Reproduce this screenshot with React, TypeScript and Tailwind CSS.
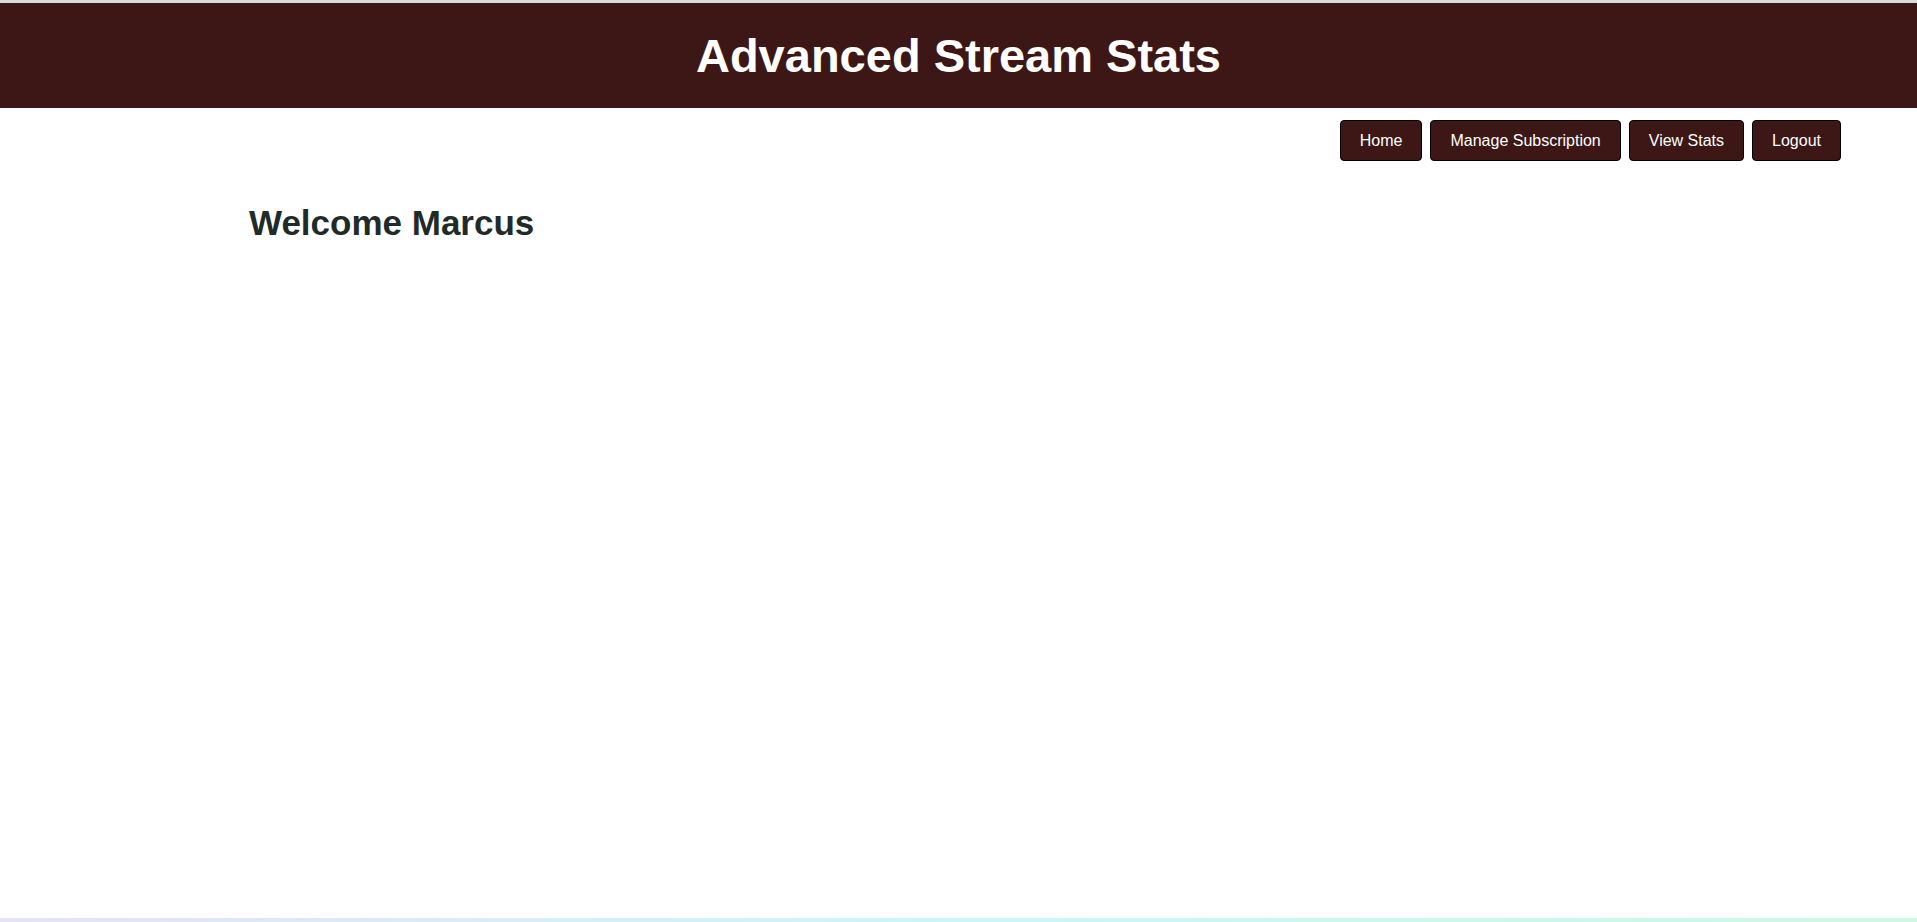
import React from "react";

const navItems = ["Home", "Manage Subscription", "View Stats", "Logout"];

export default function App() {
  return (
    <div
      className="flex h-[922px] flex-col bg-white"
      style={{ fontFamily: '"Liberation Sans", Arial, sans-serif' }}
    >
      <div className="h-[3px] bg-[#dadada]" />
      <header className="flex h-[105px] items-center justify-center bg-[#3d1716]">
        <h1 className="text-[47px] font-bold leading-none text-white">
          Advanced Stream Stats
        </h1>
      </header>
      <nav className="flex justify-end gap-[8px] pr-[76px] pt-[12px]">
        {navItems.map((item) => (
          <button
            key={item}
            className="flex h-[41px] items-center rounded-[4px] border border-black bg-[#3d1716] px-[19px] text-[16px] text-white"
          >
            {item}
          </button>
        ))}
      </nav>
      <main className="flex-1 pl-[249px] pt-[44px]">
        <h2 className="text-[35px] font-bold leading-none text-[#1f2b29]">
          Welcome Marcus
        </h2>
      </main>
      <div className="h-[4px] bg-gradient-to-r from-[#e6e2f7] via-[#c9f6f8] to-[#cdf8e2]" />
    </div>
  );
}
